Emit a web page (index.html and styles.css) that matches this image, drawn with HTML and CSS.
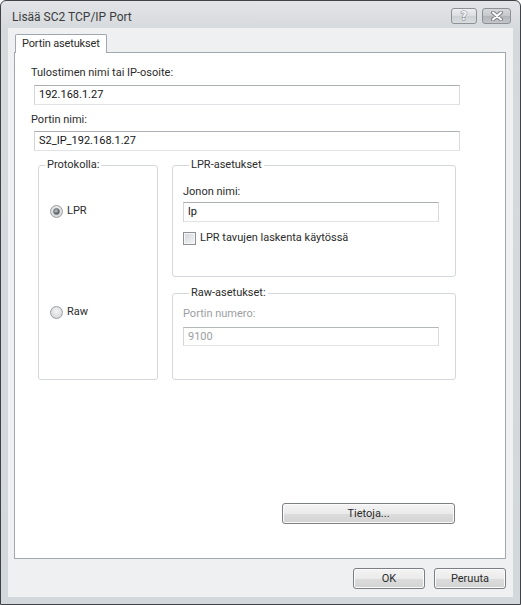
FILE: index.html
```html
<!DOCTYPE html>
<html lang="fi">
  <head>
    <meta charset="UTF-8" />
    <meta name="viewport" content="width=device-width, initial-scale=1.0" />
    <title>Lisää SC2 TCP/IP Port</title>
    <link rel="stylesheet" href="styles.css">
  </head>
  <body>
    <div class="window">
      <div class="titlebar">
        <span class="title">Lisää SC2 TCP/IP Port</span>
        <div class="caption-buttons">
          <span class="cap-btn help">?</span>
          <span class="cap-btn close">
            <svg width="14" height="10" viewBox="0 0 14 10">
              <path d="M3 1.5 L11 8.5 M11 1.5 L3 8.5" stroke="#7d8185" stroke-width="4" stroke-linecap="round" fill="none" />
              <path d="M3 1.5 L11 8.5 M11 1.5 L3 8.5" stroke="#ffffff" stroke-width="2" stroke-linecap="round" fill="none" />
            </svg>
          </span>
        </div>
      </div>

      <div class="client">
        <div class="tabs">
          <div class="tab active">Portin asetukset</div>
        </div>

        <div class="panel">
          <label class="field-label">Tulostimen nimi tai IP-osoite:</label>
          <div class="textbox wide first">192.168.1.27</div>
          <label class="field-label second">Portin nimi:</label>
          <div class="textbox wide">S2_IP_192.168.1.27</div>

          <div class="groups">
            <fieldset class="group protocol">
              <legend>Protokolla:</legend>
              <div class="radio-row lpr-row">
                <span class="radio checked"></span>
                <span>LPR</span>
              </div>
              <div class="radio-row raw-row">
                <span class="radio"></span>
                <span>Raw</span>
              </div>
            </fieldset>

            <div class="settings">
              <fieldset class="group lpr">
                <legend>LPR-asetukset</legend>
                <label class="group-label">Jonon nimi:</label>
                <div class="textbox narrow">lp</div>
                <div class="check-row">
                  <span class="checkbox"></span>
                  <span>LPR tavujen laskenta käytössä</span>
                </div>
              </fieldset>

              <fieldset class="group raw">
                <legend>Raw-asetukset:</legend>
                <label class="group-label disabled">Portin numero:</label>
                <div class="textbox narrow disabled">9100</div>
              </fieldset>
            </div>
          </div>

          <div class="panel-actions">
            <span class="btn info">Tietoja...</span>
          </div>
        </div>

        <div class="dialog-buttons">
          <span class="btn">OK</span>
          <span class="btn">Peruuta</span>
        </div>
      </div>
    </div>
  </body>
</html>
```

FILE: styles.css
```css
body {
  margin: 0;
  font-family: Roboto, "Liberation Sans", sans-serif;
  font-size: 11px;
  color: #2b2b2b;
  background: #ffffff;
}
.window {
  width: 521px;
  height: 605px;
  box-sizing: border-box;
  border: 1px solid #3f4347;
  border-radius: 6px 6px 0 0;
  background: linear-gradient(#e2e4e7, #d6d9dc 30px, #d3d8dd);
  padding-bottom: 7px;
}
.titlebar {
  height: 27px;
  display: flex;
  justify-content: space-between;
  align-items: flex-start;
  padding: 0 9px 0 11px;
}
.title {
  font-size: 12px;
  line-height: 14px;
  margin-top: 9px;
  color: #3a3c3e;
}
.caption-buttons {
  display: flex;
  gap: 5px;
  margin-top: 7px;
}
.cap-btn {
  height: 14px;
  border: 1px solid #8d9196;
  border-radius: 3px;
  display: flex;
  align-items: center;
  justify-content: center;
  background: linear-gradient(#eceef0, #dadde0 50%, #cdd0d4 51%, #d9dcdf);
}
.help {
  width: 24px;
  font-family: "DejaVu Sans", sans-serif;
  font-size: 12px;
  font-weight: bold;
  color: #f4f5f6;
  -webkit-text-stroke: 1px #7f8387;
  paint-order: stroke fill;
}
.close {
  width: 27px;
  background: linear-gradient(#d6d9dc, #c3c7cb 50%, #b2b6bb 51%, #c2c6ca);
}
.client {
  margin: 0 7px;
  height: 569px;
  box-sizing: border-box;
  background: #eef0f2;
  padding: 6px 7px 0 6px;
}
.tabs {
  display: flex;
}
.tab {
  height: 18px;
  line-height: 18px;
  padding: 0 6px;
  white-space: nowrap;
  letter-spacing: -0.15px;
  border: 1px solid #a1a7ae;
  border-bottom: none;
  border-radius: 2px 2px 0 0;
  background: #ffffff;
  margin-left: 1px;
  margin-bottom: -1px;
  position: relative;
  z-index: 1;
}
.panel {
  height: 507px;
  box-sizing: border-box;
  border: 1px solid #a1a7ae;
  background: #ffffff;
  padding: 13px 0 0 16px;
}
.field-label {
  display: block;
  line-height: 14px;
}
.field-label.second {
  margin-top: 8px;
}
.textbox {
  height: 20px;
  box-sizing: border-box;
  line-height: 18px;
  padding: 0 4px;
  border: 1px solid;
  border-color: #abaeb2 #d8dadd #e0e2e5 #d3d5d8;
  color: #141414;
  background: #ffffff;
}
.textbox.wide {
  width: 426px;
  margin: 5px 0 0 3px;
}
.field-label.second + .textbox {
  margin-top: 4px;
}
.groups {
  display: flex;
  gap: 14px;
  margin: 7px 0 0 7px;
}
.group {
  margin: 0;
  padding: 0;
  border: 1px solid #d4d8dd;
  border-radius: 3px;
  box-sizing: border-box;
}
.group legend {
  margin-left: 6px;
  padding: 0 2px;
  line-height: 14px;
}
.protocol {
  width: 120px;
  height: 222px;
}
.radio-row {
  display: flex;
  align-items: center;
  gap: 4px;
  line-height: 14px;
  margin-left: 11px;
}
.lpr-row {
  margin-top: 32px;
}
.raw-row {
  margin-top: 87px;
}
.radio {
  width: 11px;
  height: 11px;
  border: 1px solid #9a9ea2;
  border-radius: 50%;
  background: radial-gradient(circle at 50% 40%, #f4f5f6, #dcdee0 60%, #c9ccd0);
  display: flex;
  align-items: center;
  justify-content: center;
}
.radio.checked::after {
  content: "";
  width: 5px;
  height: 5px;
  border-radius: 50%;
  background: radial-gradient(circle at 40% 35%, #c8cacc, #5a5d60 70%);
  border: 1px solid #6f7377;
}
.settings {
  display: flex;
  flex-direction: column;
  gap: 9px;
}
.lpr,
.raw {
  width: 284px;
  padding-left: 10px;
}
.lpr {
  height: 119px;
}
.raw {
  height: 94px;
}
.group-label {
  display: block;
  line-height: 14px;
}
.lpr .group-label {
  margin-top: 13px;
}
.raw .group-label {
  margin-top: 7px;
}
.textbox.narrow {
  width: 256px;
  margin-top: 3px;
}
.raw .textbox.narrow {
  margin-top: 6px;
  height: 19px;
  line-height: 17px;
}
.disabled {
  color: #9c9ea1;
}
.textbox.disabled {
  border-color: #b4b7bb #d8dadd #e0e2e5 #d3d5d8;
}
.check-row {
  display: flex;
  align-items: center;
  gap: 4px;
  line-height: 14px;
  margin-top: 9px;
}
.checkbox {
  width: 11px;
  height: 11px;
  border: 1px solid #8e9296;
  background: linear-gradient(135deg, #d4d6d8, #f4f5f6);
  box-shadow: inset 0 0 0 1px #f6f6f6;
}
.panel-actions {
  display: flex;
  justify-content: flex-end;
  padding-right: 50px;
  margin-top: 123px;
}
.btn {
  height: 21px;
  box-sizing: border-box;
  line-height: 19px;
  text-align: center;
  border: 1px solid #7c7f83;
  border-radius: 3px;
  background: linear-gradient(#f4f4f4, #ebebeb 50%, #dcdcdc 51%, #d3d3d3);
  box-shadow: inset 0 0 0 1px #fbfbfb;
  color: #2b2b2b;
}
.btn.info {
  width: 173px;
}
.dialog-buttons {
  display: flex;
  justify-content: flex-end;
  gap: 9px;
  margin-top: 9px;
}
.dialog-buttons .btn {
  width: 72px;
}
```
